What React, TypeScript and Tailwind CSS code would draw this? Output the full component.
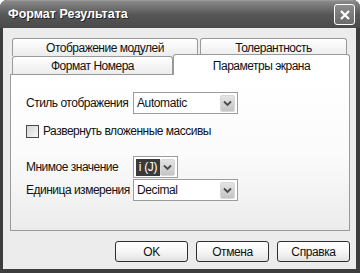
import React from "react";

const font = { fontFamily: '"Liberation Sans", Arial, sans-serif' };

function Arrow() {
  return (
    <div className="shrink-0 flex items-center justify-center rounded-[2px] bg-gradient-to-b from-[#e4e4e4] to-[#c4c4c4] border border-[#d8d8d8] w-[15px] h-[17px]">
      <svg width="9" height="7" viewBox="0 0 9 7">
        <path d="M1 1.5 L4.5 5 L8 1.5" stroke="#4a4a4a" strokeWidth="1.8" fill="none" />
      </svg>
    </div>
  );
}

function Select({ value, width, highlighted = false }: { value: string; width: string; highlighted?: boolean }) {
  return (
    <div className={`${width} h-[22px] border border-[#9c9c9c] bg-white flex items-center pl-[2px] pr-[2px]`}>
      <div className="flex-1 flex items-center min-w-0">
        {highlighted ? (
          <span className="bg-[#3a3a3a] text-white w-[24px] text-center whitespace-nowrap h-[17px] leading-[17px] text-[12px] tracking-[-0.3px]">i (J)</span>
        ) : (
          <span className="text-[12px] tracking-[-0.4px] text-[#111] pl-[1px] whitespace-nowrap">{value}</span>
        )}
      </div>
      <Arrow />
    </div>
  );
}

function Btn({ children }: { children: React.ReactNode }) {
  return (
    <div className="w-[73px] h-[21px] rounded-[3px] border border-[#2e2e2e] bg-gradient-to-b from-white via-[#f6f6f6] to-[#e2e2e2] flex items-center justify-center text-[12px] tracking-[-0.4px] text-[#111]">
      {children}
    </div>
  );
}

export default function App() {
  return (
    <div style={font} className="w-[360px] h-[273px] bg-[#3d3d3d] rounded-t-[7px] flex flex-col overflow-hidden">
      <div className="h-[28px] shrink-0 bg-gradient-to-b from-[#8a8a8a] via-[#575757] to-[#4a4a4a] flex items-center pl-[8px] pr-[5px] rounded-t-[7px] border-t border-[#9a9a9a]">
        <span className="text-white font-bold text-[12.5px] [text-shadow:1px_1px_0_#222] flex-1">Формат Результата</span>
        <div className="w-[21px] h-[21px] rounded-[3px] border border-white bg-gradient-to-b from-[#8c8c8c] to-[#6a6a6a] flex items-center justify-center">
          <svg width="12" height="12" viewBox="0 0 12 12">
            <path d="M2 2 L10 10 M10 2 L2 10" stroke="white" strokeWidth="2.2" />
          </svg>
        </div>
      </div>
      <div className="flex-1 bg-[#ececec] ml-[3px] mr-[4px] mb-[4px] pt-[10px] pl-[7px] pr-[6px] flex flex-col">
        <div className="flex flex-col text-[12px] tracking-[-0.5px] text-[#111]">
          <div className="flex gap-[2px] pl-[2px] h-[18px]">
            <div className="w-[186px] border border-b-0 border-[#9a9a9a] rounded-t-[3px] bg-gradient-to-b from-white to-[#ececec] flex items-center justify-center">Отображение модулей</div>
            <div className="w-[147px] border border-b-0 border-[#9a9a9a] rounded-t-[3px] bg-gradient-to-b from-white to-[#ececec] flex items-center justify-center">Толерантность</div>
          </div>
          <div className="flex pl-[2px] h-[18px] items-end">
            <div className="w-[161px] h-[18px] border border-b-0 border-[#9a9a9a] rounded-t-[3px] bg-gradient-to-b from-white to-[#ececec] flex items-center justify-center">Формат Номера</div>
            <div className="relative z-10 w-[177px] h-[21px] -mb-[1px] border border-b-0 border-[#9a9a9a] rounded-t-[3px] bg-white flex items-start justify-center pt-[2px]">Параметры экрана</div>
          </div>
        </div>
        <div className="h-[157px] border border-[#9a9a9a] bg-gradient-to-b from-white via-[#fbfbfb] to-[#ececec] pl-[15px] pt-[17px] text-[12px] tracking-[-0.5px] text-[#111] flex flex-col">
          <div className="flex items-center">
            <span className="w-[107px] shrink-0 whitespace-nowrap">Стиль отображения</span>
            <Select value="Automatic" width="w-[105px]" />
          </div>
          <div className="flex items-center mt-[8px] gap-[4px]">
            <div className="w-[13px] h-[13px] border border-[#4a4a4a] bg-gradient-to-br from-[#d6d6d6] to-[#f8f8f8]" />
            <span>Развернуть вложенные массивы</span>
          </div>
          <div className="flex items-center mt-[16px]">
            <span className="w-[107px] shrink-0 whitespace-nowrap">Мнимое значение</span>
            <Select value="" width="w-[45px]" highlighted />
          </div>
          <div className="flex items-center mt-[1px]">
            <span className="w-[107px] shrink-0 whitespace-nowrap">Единица измерения</span>
            <Select value="Decimal" width="w-[105px]" />
          </div>
        </div>
        <div className="flex justify-end gap-[8px] mt-[10px]">
          <Btn>OK</Btn>
          <Btn>Отмена</Btn>
          <Btn>Справка</Btn>
        </div>
      </div>
    </div>
  );
}
